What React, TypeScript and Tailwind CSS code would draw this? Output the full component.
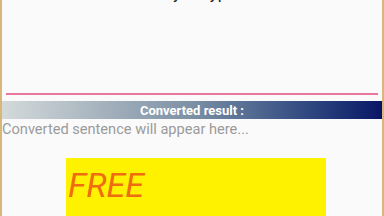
export default function App() {
  return (
    <div className="w-[384px] h-[216px] overflow-hidden bg-[#d9b77a] pl-[2px] pr-[2px]" style={{ fontFamily: 'Roboto, "Liberation Sans", sans-serif' }}>
      <div className="h-full bg-[#fafafa] flex flex-col overflow-hidden">
        {/* Input area */}
        <div className="h-[96px] px-[2px] flex flex-col">
          <p className="mt-[-17px] text-[17px] leading-[20px] text-[#222] pl-[10px]">
            Please enter the text you typed here
          </p>
          <div className="flex-1" />
          <div className="mx-[2px] mb-[1px] h-[2px] bg-[#e8799c]" />
        </div>

        {/* Result header */}
        <div className="mt-[5px] h-[18px] flex items-center justify-center bg-gradient-to-r from-[#d4dada] via-[#7d90a4] to-[#0b1466]">
          <span className="text-[13px] font-bold text-white leading-none">Converted result :</span>
        </div>
        <p className="text-[14.6px] leading-[18px] text-[#9a9a9a] mt-[1px]">
          Converted sentence will appear here...
        </p>

        {/* Ad */}
        <div className="mt-[20px] ml-[64px] w-[260px] flex-1 bg-[#fff200]">
          <span className="block pl-[2px] pt-[10px] text-[34px] leading-none italic text-[#ef6c10]">FREE</span>
        </div>
      </div>
    </div>
  );
}
